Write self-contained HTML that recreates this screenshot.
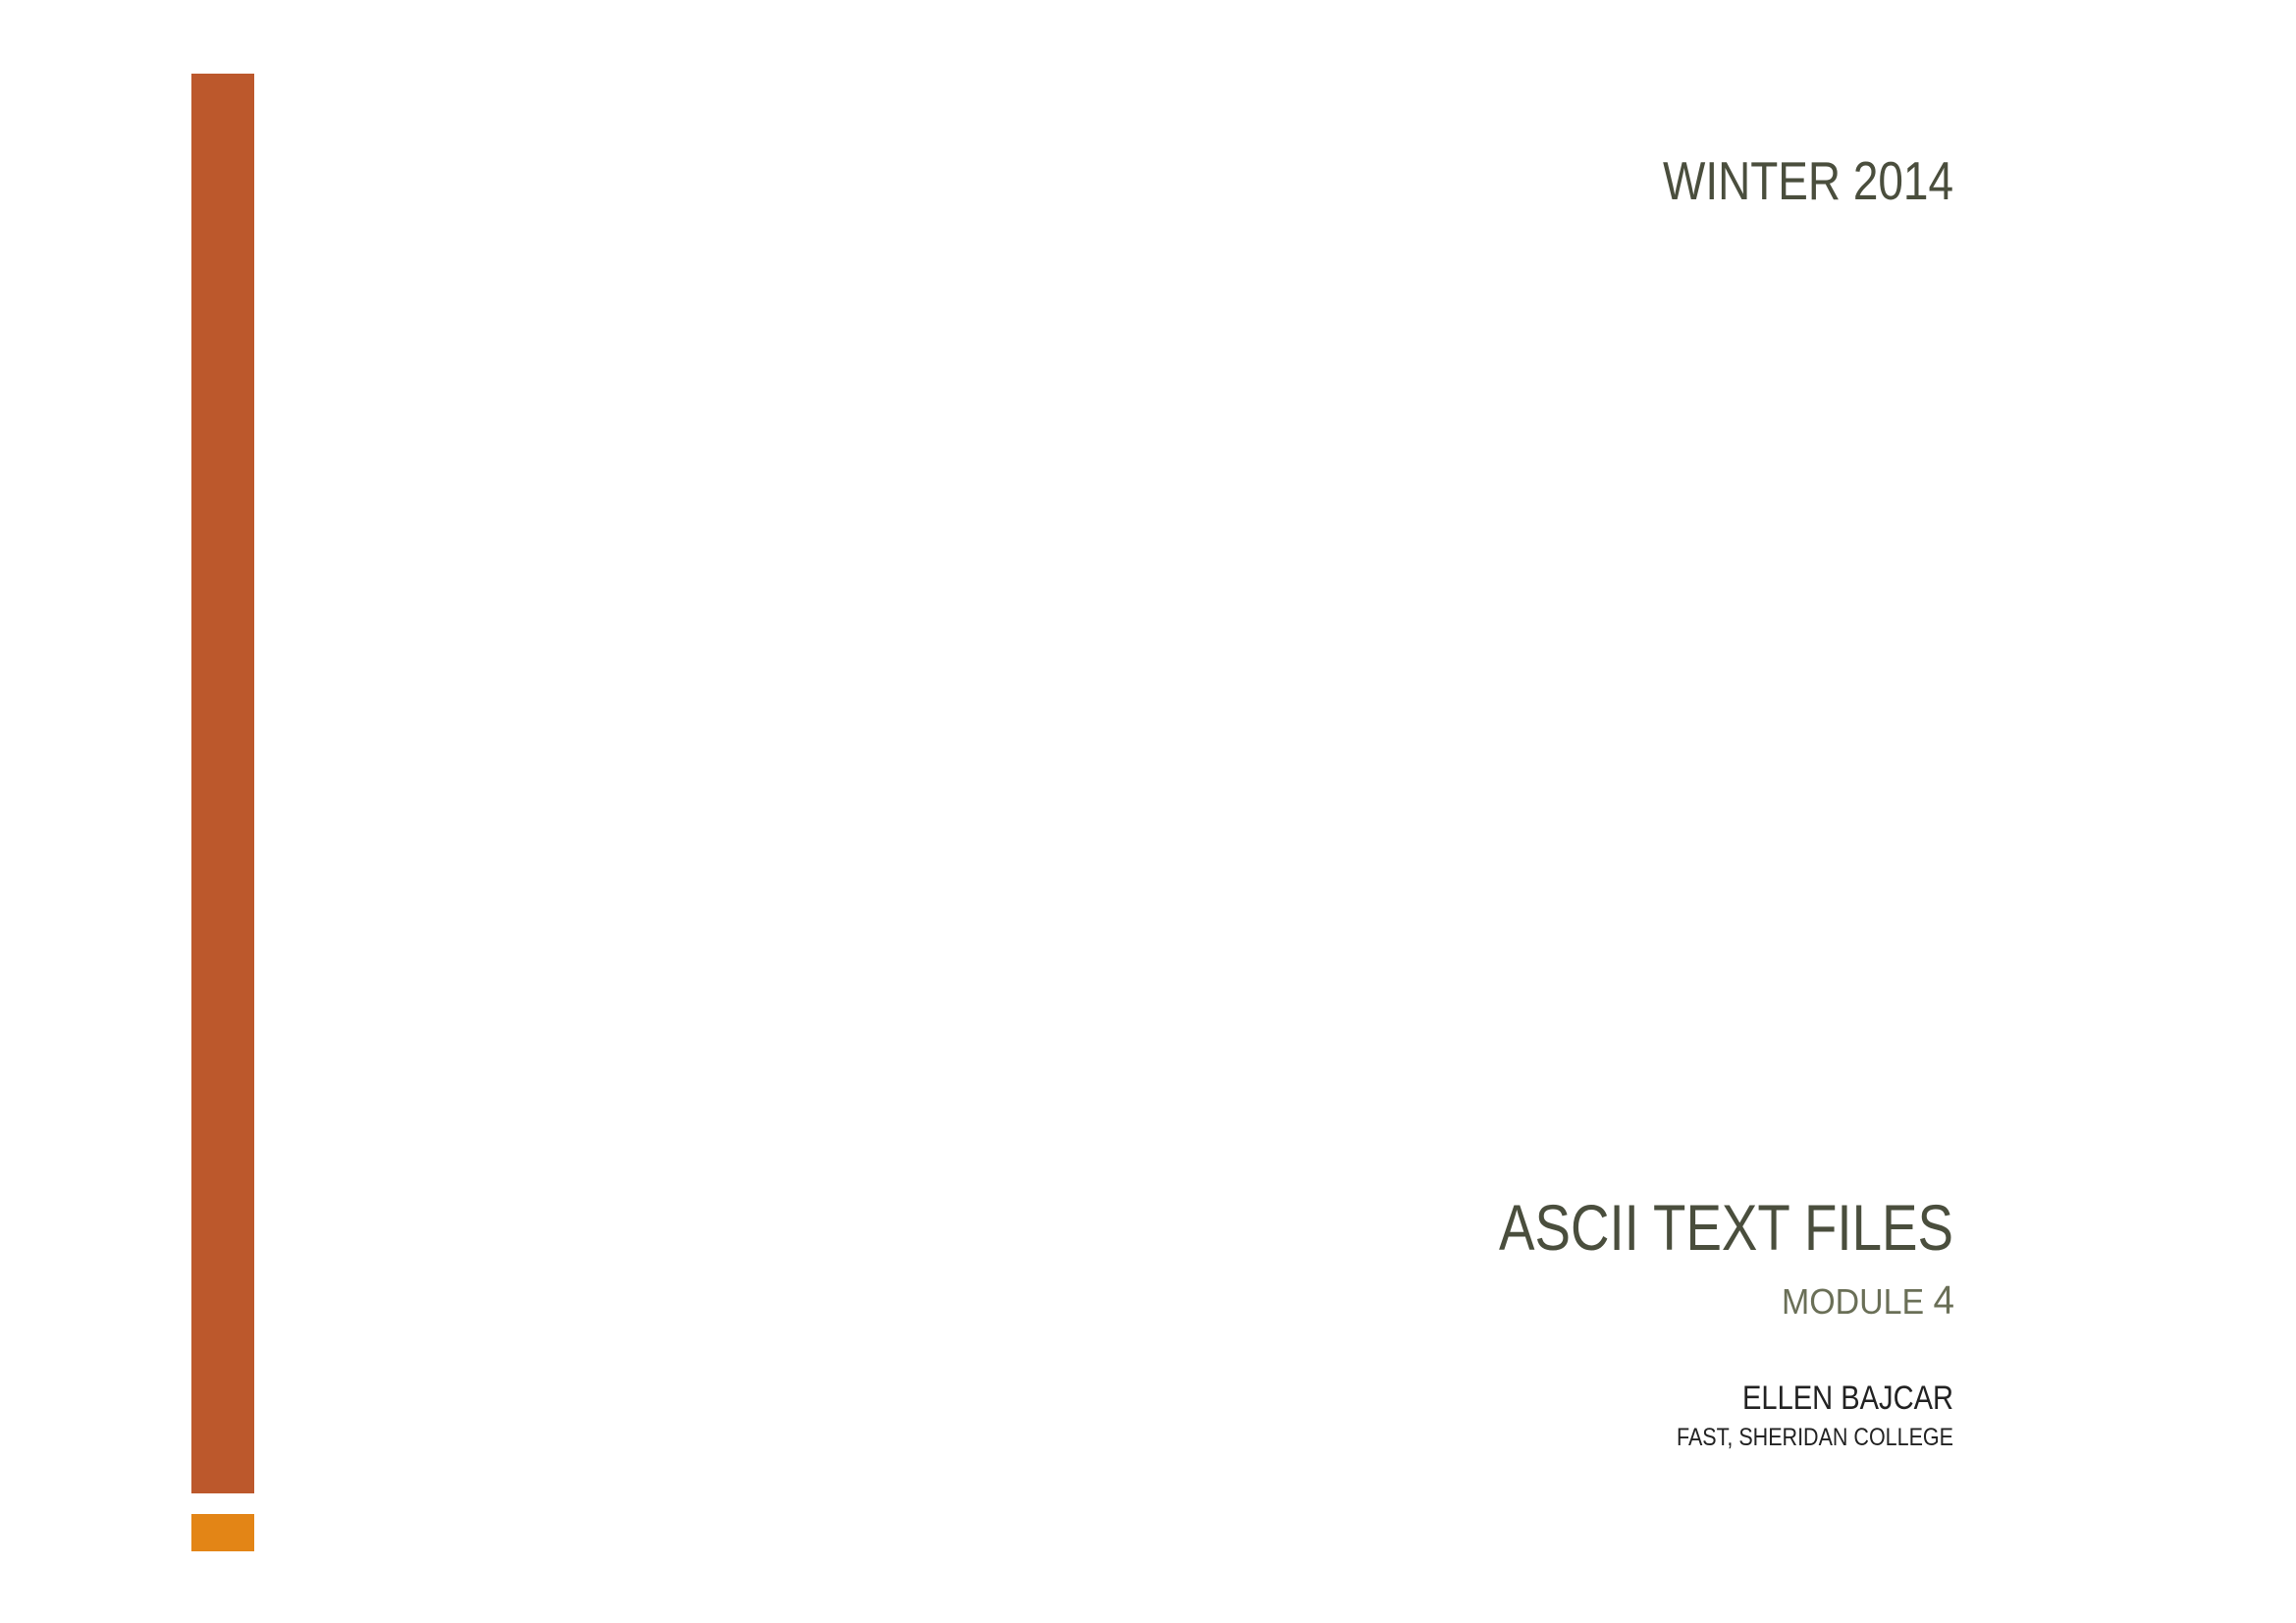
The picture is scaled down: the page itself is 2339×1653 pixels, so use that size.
<!DOCTYPE html>
<html><head><meta charset="utf-8"><style>
html,body{margin:0;padding:0;background:#fff;width:2339px;height:1653px;overflow:hidden}
svg{display:block}
text{font-family:"Liberation Sans",sans-serif}
</style></head><body>
<svg width="2339" height="1653" viewBox="0 0 2339 1653">
<rect x="195" y="75" width="64" height="1446" fill="#bc582c"/>
<rect x="195" y="1542" width="64" height="38" fill="#e38516"/>
<text x="1694" y="203" font-size="55" fill="#4a4e3d" textLength="296" lengthAdjust="spacingAndGlyphs">WINTER 2014</text>
<text x="1527" y="1273" font-size="66" fill="#4a4e3d" textLength="463" lengthAdjust="spacingAndGlyphs">ASCII TEXT FILES</text>
<text x="1815" y="1338" font-size="36" fill="#6a6f57" textLength="176" lengthAdjust="spacingAndGlyphs">MODULE <tspan font-size="41">4</tspan></text>
<text x="1775" y="1435" font-size="34" fill="#222" textLength="215" lengthAdjust="spacingAndGlyphs">ELLEN BAJCAR</text>
<text x="1708" y="1472" font-size="25" fill="#222" textLength="282" lengthAdjust="spacingAndGlyphs">FAST, SHERIDAN COLLEGE</text>
</svg>
</body></html>
